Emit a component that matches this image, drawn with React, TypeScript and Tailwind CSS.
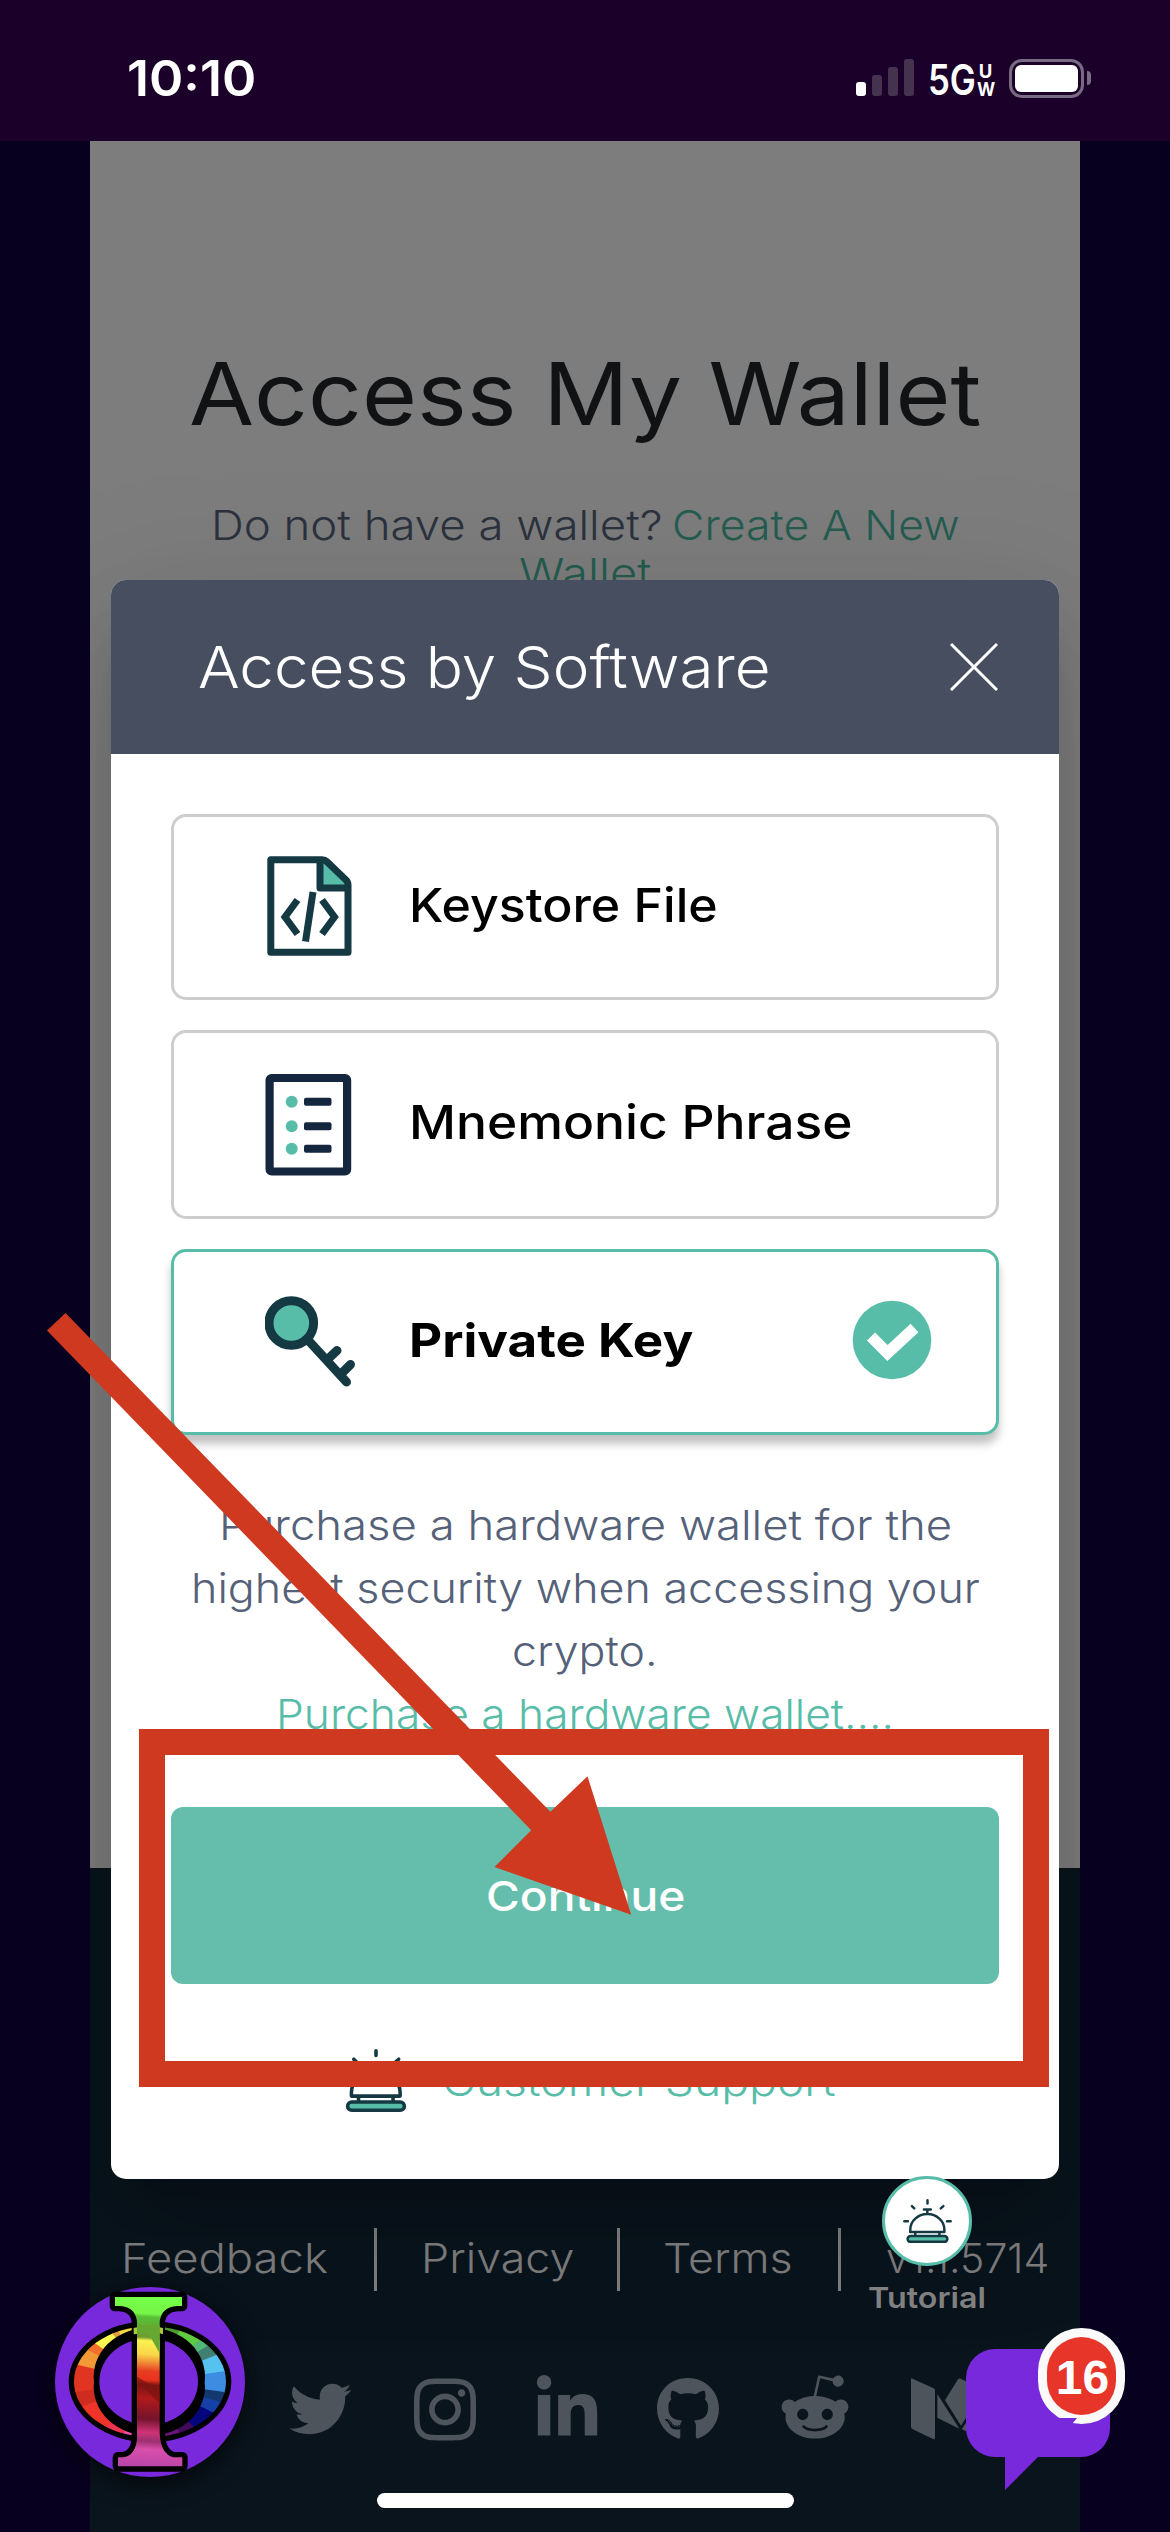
import { useLayoutEffect, useRef, useState, type ReactNode } from "react";
import { FaTwitter, FaInstagram, FaLinkedinIn, FaGithub, FaRedditAlien } from "react-icons/fa";

/** A single line of text stretched horizontally to fill a given width. */
function Fit({ w, children }: { w: number; children: ReactNode }) {
  const ref = useRef<HTMLSpanElement>(null);
  const [scale, setScale] = useState(1);
  useLayoutEffect(() => {
    if (ref.current) setScale(w / ref.current.offsetWidth);
  }, [w]);
  return (
    <span className="inline-block text-left" style={{ width: w }}>
      <span ref={ref} className="inline-block origin-left whitespace-nowrap" style={{ transform: `scaleX(${scale})` }}>
        {children}
      </span>
    </span>
  );
}

function StatusBar() {
  return (
    <header className="flex h-[141px] items-start justify-between bg-[#1b0029] pl-[127px] pr-[79px] pt-[53px] text-white">
      <div className="text-[50px] font-semibold leading-[50px]">
        <Fit w={129}>10:10</Fit>
      </div>
      <div className="flex h-[50px] items-center">
        <div className="mt-[-1px] flex items-end gap-[6px]">
          <i className="h-[14px] w-[10px] rounded-[3px] bg-white" />
          <i className="h-[21px] w-[10px] rounded-[3px] bg-[#45324f]" />
          <i className="h-[29px] w-[10px] rounded-[3px] bg-[#45324f]" />
          <i className="h-[37px] w-[10px] rounded-[3px] bg-[#45324f]" />
        </div>
        <span className="ml-[14px] mt-[3px] text-[42px] font-semibold leading-[42px]">
          <Fit w={48}>5G</Fit>
        </span>
        <span className="mt-[3px] flex w-[19px] flex-col items-center text-[18.500px] font-bold leading-[18px]">
          <span>U</span>
          <span><Fit w={18}>W</Fit></span>
        </span>
        <div className="ml-[14px] h-[39px] w-[75px] rounded-[13px] border-[3px] border-[#796b84] p-[3px]">
          <div className="h-full rounded-[6px] bg-white" />
        </div>
        <i className="ml-[3px] h-[14px] w-[4px] rounded-r-full bg-[#796b84]" />
      </div>
    </header>
  );
}

function KeystoreIcon() {
  return (
    <svg className="h-[104px] w-[90px]" viewBox="265 855 90 104" fill="none" stroke="#153943" strokeWidth="7" strokeLinejoin="round">
      <path d="M320 860V888H348V881L326 860Z" fill="#57bda8" stroke="none" />
      <path d="M270.8 859.7H322Q325 859.7 327 861.7L346 880Q348 882 348 885V952.3H270.8Z" />
      <path d="M320 861V888H347" />
      <path d="M297.5 900L285 917L297.5 934M322 900L334.5 917L322 934M313 892L305.5 941.5" strokeLinejoin="miter" />
    </svg>
  );
}

function MnemonicIcon() {
  return (
    <svg className="h-[104px] w-[90px]" viewBox="265 1074 90 104">
      <rect x="269.6" y="1079" width="77.5" height="93.5" rx="2" fill="none" stroke="#14273f" strokeWidth="8.2" />
      {[1102.7, 1127.3, 1149.8].map((y) => (
        <g key={y}>
          <circle cx="291.7" cy={y} r="6" fill="#57bda8" />
          <rect x="304" y={y - 4} width="27.5" height="8" rx="2" fill="#14273f" />
        </g>
      ))}
    </svg>
  );
}

function KeyIcon() {
  return (
    <svg className="h-[104px] w-[92px]" viewBox="265 1290 92 104" stroke="#153943" strokeLinecap="round">
      <path d="M308 1340L346.500 1382M328 1359L337 1350.500M342 1373L350.500 1364.500" strokeWidth="9" />
      <circle cx="291.3" cy="1323" r="22.300" fill="#57bda8" strokeWidth="9" />
    </svg>
  );
}

function Bell({ className }: { className: string }) {
  return (
    <svg className={className} viewBox="126 84 148 136" fill="none" stroke="#153943" strokeWidth="7.500" strokeLinecap="round" strokeLinejoin="round">
      <path d="M200 89V99M153 107L160 114M248 107L240 114M130 153H141M259 153H270M189 117H210" />
      <path d="M199.500 117V130M163 188V196M236 188V196M148 185V178A51.500 47 0 0 1 251 178V185Z" strokeLinecap="butt" />
      <rect x="140" y="197.500" width="120" height="17.500" rx="8.700" fill="#57bda8" />
    </svg>
  );
}

function CheckBadge() {
  return (
    <svg className="h-[80px] w-[80px]" viewBox="851.5 1300 80 80">
      <circle cx="891.5" cy="1340" r="39.300" fill="#57bda8" />
      <path d="M870.500 1336.500L887 1353L914 1328" fill="none" stroke="#fff" strokeWidth="11.500" />
    </svg>
  );
}

function AccessModal() {
  return (
    <div className="absolute bottom-0 left-[90px] right-[90px] top-[141px] overflow-hidden">
      <section className="mx-[21px] mt-[439px] h-[1599px] rounded-[15px] bg-white shadow-[0_33px_45px_-21px_rgba(0,0,0,0.2),0_72px_114px_9px_rgba(0,0,0,0.08),0_27px_138px_24px_rgba(0,0,0,0.08)]">
        <div className="flex h-[174px] items-center justify-between rounded-t-[15px] bg-[#464e5f] pl-[87px] pr-[61.500px] text-[58px] font-light leading-[58px] text-white">
          <Fit w={573}>Access by Software</Fit>
          <svg className="size-[48px]" viewBox="0 0 48 48" stroke="#fff" strokeWidth="3">
            <path d="M1 1L47 47M47 1L1 47" />
          </svg>
        </div>
        <div className="flex flex-col px-[60px] pt-[60px]">
          <div className="flex h-[186px] items-center rounded-[15px] border-[3px] border-[#cdcdcd] pl-[91px]">
            <KeystoreIcon />
            <span className="-mt-1 ml-[54px] text-[46.500px] font-[450] leading-[48px] text-black">
              <Fit w={309}>Keystore File</Fit>
            </span>
          </div>
          <div className="mt-[30px] flex h-[189px] items-center rounded-[15px] border-[3px] border-[#cdcdcd] pl-[91px]">
            <MnemonicIcon />
            <span className="-mt-[5px] ml-[54px] text-[46.500px] font-[450] leading-[48px] text-black">
              <Fit w={443}>Mnemonic Phrase</Fit>
            </span>
          </div>
          <div className="mt-[30px] flex h-[186px] items-center rounded-[15px] border-[3px] border-[#57bda8] bg-white pl-[91px] pr-[64px] shadow-[0_9px_9px_rgba(0,0,0,0.24)]">
            <KeyIcon />
            <span className="-mt-1 ml-[52px] mr-auto text-[46.500px] font-bold leading-[48px] text-black">
              <Fit w={284}>Private Key</Fit>
            </span>
            <div className="-mt-1"><CheckBadge /></div>
          </div>
          <div className="mt-[59px] flex flex-col items-center text-[41px] font-[350] leading-[63px] text-[#556178]">
            <Fit w={733}>Purchase a hardware wallet for the</Fit>
            <Fit w={789}>highest security when accessing your</Fit>
            <Fit w={146}>crypto.</Fit>
            <span className="text-[#57bda8]"><Fit w={618}>Purchase a hardware wallet....</Fit></span>
          </div>
          <button className="mt-[61px] flex h-[177px] items-center justify-center rounded-[12px] bg-[#65beab] text-[41px] font-[450] leading-[42px] text-white">
            <Fit w={199}>Continue</Fit>
          </button>
          <div className="mt-[64px] flex items-center justify-center gap-[31px] pl-[5px] text-[41px] font-[350] leading-[42px] text-[#57bda8]">
            <Bell className="h-[65px] w-[70px]" />
            <Fit w={393}>Customer Support</Fit>
          </div>
        </div>
      </section>
    </div>
  );
}

function Divider() {
  return <i className="h-[63px] w-[3px] bg-[#808080]" />;
}

function MediumIcon() {
  return (
    <svg className="h-[62px] w-[76px]" viewBox="153 626 228 186" fill="currentColor">
      <path d="M153 630Q153 625 158 628L221 657Q225 659 225 664V806Q225 812 219 809L157 779Q153 777 153 772Z" />
      <path d="M232 674L298 778L232 745ZM255 693L294 630Q297 626 302 628L370 661L303 769ZM377 672V810L305 780Z" />
    </svg>
  );
}

function Footer() {
  return (
    <footer className="h-[664px] bg-[#0a141d] pt-[360px]">
      <nav className="ml-[31px] flex h-[63px] items-start whitespace-nowrap text-[41px] font-light leading-[60px] text-[#808080]">
        <span className="w-[253px]"><Fit w={207}>Feedback</Fit></span>
        <Divider />
        <span className="ml-[44px] w-[196px]"><Fit w={153}>Privacy</Fit></span>
        <Divider />
        <span className="ml-[43px] w-[175px]"><Fit w={130}>Terms</Fit></span>
        <Divider />
        <span className="ml-[45px]"><Fit w={163}>v1.1.5714</Fit></span>
      </nav>
      <div className="ml-[199px] mt-[82px] flex h-[72px] items-center text-[#4e545b]">
        <FaTwitter className="h-[62px] w-[63px]" />
        <FaInstagram className="ml-[62px] h-[71px] w-[62px]" />
        <FaLinkedinIn className="ml-[60px] h-[69px] w-[62px]" />
        <FaGithub className="ml-[59px] h-[64px] w-[62px]" />
        <FaRedditAlien className="-mt-1 ml-[60px] h-[72px] w-[72px]" />
        <span className="ml-[60px]"><MediumIcon /></span>
      </div>
    </footer>
  );
}

const RING: [number, number, string][] = [
  [0, 16, "#58b233"], [16, 30, "#4f9a30"], [30, 50, "#5fcb40"], [50, 58, "#52b878"], [58, 68, "#3f8072"],
  [68, 82, "#56c2ef"], [82, 98, "#3d8ce2"], [98, 106, "#12386f"], [106, 116, "#1440a8"], [116, 136, "#05057e"],
  [136, 150, "#420a5c"], [150, 165, "#6c1580"], [165, 190, "#a0307c"], [190, 207, "#f050a8"], [207, 224, "#ee3350"],
  [224, 250, "#ee3428"], [250, 262, "#cf2c20"], [262, 283, "#e03520"], [283, 297, "#f39a36"], [297, 305, "#f0702c"],
  [305, 322, "#fdf84f"], [322, 328, "#e0a040"], [328, 340, "#f4d944"], [340, 360, "#fbf259"],
];

function wedge(a: number, b: number) {
  const p = (d: number) => {
    const r = (d * Math.PI) / 180;
    return `${330 + 300 * Math.sin(r)} ${335 - 300 * Math.cos(r)}`;
  };
  return `M330 335L${p(a)}L${p(b + 0.6)}Z`;
}

const STEM = "M225 81H426V108H412Q360 112 359 160V490Q362 552 400 562H427V589H234V562H248Q290 556 291 500V160Q290 112 240 108H225Z";

function PhiAvatar() {
  return (
    <div className="absolute left-[55px] top-[2287px] size-[190px] rounded-full bg-[#7829db] shadow-[0_6px_24px_rgba(0,0,0,0.7)]">
      <svg className="size-[190px] overflow-visible" viewBox="45 51 570 570">
        <defs>
          <clipPath id="ring">
            <path clipRule="evenodd" d="M102 335A228 166 0 1 1 558 335A228 166 0 1 1 102 335ZM162 335A167 146 0 1 0 494 335A167 146 0 1 0 162 335Z" />
          </clipPath>
          <linearGradient id="stem" gradientUnits="userSpaceOnUse" x1="345" y1="81" x2="315" y2="589">
            <stop offset="0" stopColor="#73ff48" />
            <stop offset="0.1" stopColor="#78f548" />
            <stop offset="0.12" stopColor="#56c037" />
            <stop offset="0.24" stopColor="#6f9c30" />
            <stop offset="0.26" stopColor="#fbf352" />
            <stop offset="0.34" stopColor="#f9d648" />
            <stop offset="0.44" stopColor="#e83c22" />
            <stop offset="0.49" stopColor="#e8331f" />
            <stop offset="0.52" stopColor="#7c140f" />
            <stop offset="0.6" stopColor="#b01a1a" />
            <stop offset="0.72" stopColor="#74132e" />
            <stop offset="0.8" stopColor="#cf3478" />
            <stop offset="0.85" stopColor="#9c3070" />
            <stop offset="0.9" stopColor="#d94fab" />
            <stop offset="1" stopColor="#b845a8" />
          </linearGradient>
        </defs>
        <path fillRule="evenodd" d="M86 335A244 182 0 1 1 574 335A244 182 0 1 1 86 335ZM178 335A148 130 0 1 0 474 335A148 130 0 1 0 178 335Z" />
        <g clipPath="url(#ring)">
          {RING.map(([a, b, c]) => (
            <path key={a} d={wedge(a, b)} fill={c} />
          ))}
        </g>
        <path d={STEM} fill="url(#stem)" stroke="#000" strokeWidth="32" strokeLinejoin="round" paintOrder="stroke" />
        <path d="M291 165H359V190H291ZM291 190H325L359 250V190Z" fill="#66a832" />
        <path d="M281 174V193L291 192V172ZM359 172V190L369 193V174Z" fill="#a8c83c" />
        <path d="M291 320L359 360V400L291 335Z" fill="#7c140f" opacity="0.7" />
      </svg>
    </div>
  );
}

function ChatBubble() {
  return (
    <div className="absolute left-[966px] top-[2328px] h-[164px] w-[160px]">
      <svg className="absolute inset-0" width="160" height="164" viewBox="966 2328 160 164">
        <path d="M995 2349H1081A29 29 0 0 1 1110 2378V2428A29 29 0 0 1 1081 2457H1038L1005 2490V2457H995A29 29 0 0 1 966 2428V2378A29 29 0 0 1 995 2349Z" fill="#7829db" />
        <rect x="1038" y="2328" width="87" height="96" rx="43.500" fill="#fafafa" />
        <path d="M1050 2418H1077L1072 2424L1073 2426H1050Z" fill="#7829db" />
        <rect x="1047" y="2337" width="69" height="78" rx="34.500" fill="#e73529" />
      </svg>
      <span className="absolute left-[82px] top-[24px] w-[69px] text-center font-['Liberation_Sans'] text-[48px] font-bold leading-[52px] text-white">16</span>
    </div>
  );
}

function Annotation() {
  return (
    <>
      <div className="absolute left-[139px] top-[1729px] h-[358px] w-[910px] border-[26px] border-[#cf3920]" />
      <svg className="absolute left-[40px] top-[1300px]" width="600" height="620" viewBox="40 1300 600 620">
        <path d="M47 1330.600L65.500 1313L550.400 1811.800L587.500 1776.300L631.200 1914.700L494.500 1867L531.200 1830.200Z" fill="#cf3920" />
      </svg>
    </>
  );
}

export default function App() {
  return (
    <div className="relative h-[2532px] w-[1170px] overflow-hidden bg-[#08001f] font-['Inter',sans-serif]">
      <StatusBar />
      <div className="mx-[90px]">
        <main className="flex h-[1727px] flex-col items-center bg-[#7d7d7d] pt-[203px]">
          <h1 className="text-[87px] font-normal leading-[100px] text-[#111213]">
            <Fit w={792}>Access My Wallet</Fit>
          </h1>
          <p className="mt-[57px] flex flex-col items-center text-[41px] font-[350] leading-[48px] text-[#2b323d]">
            <span className="flex gap-[10px]">
              <Fit w={451}>Do not have a wallet?</Fit>
              <span className="text-[#255c50]"><Fit w={287}>Create A New</Fit></span>
            </span>
            <span className="text-[#255c50]"><Fit w={132}>Wallet</Fit></span>
          </p>
        </main>
        <Footer />
      </div>
      <AccessModal />
      <div className="absolute left-[864px] top-[2176px] flex w-[126px] flex-col items-center">
        <div className="flex size-[90px] items-center justify-center rounded-full border-[3px] border-[#57bda8] bg-white">
          <Bell className="h-[46px] w-[49px]" />
        </div>
        <span className="mt-[17px] text-[29px] font-semibold leading-[30px] text-[#808080]"><Fit w={118}>Tutorial</Fit></span>
      </div>
      <PhiAvatar />
      <ChatBubble />
      <div className="absolute left-[377px] top-[2493px] h-[15px] w-[417px] rounded-full bg-white" />
      <Annotation />
    </div>
  );
}
